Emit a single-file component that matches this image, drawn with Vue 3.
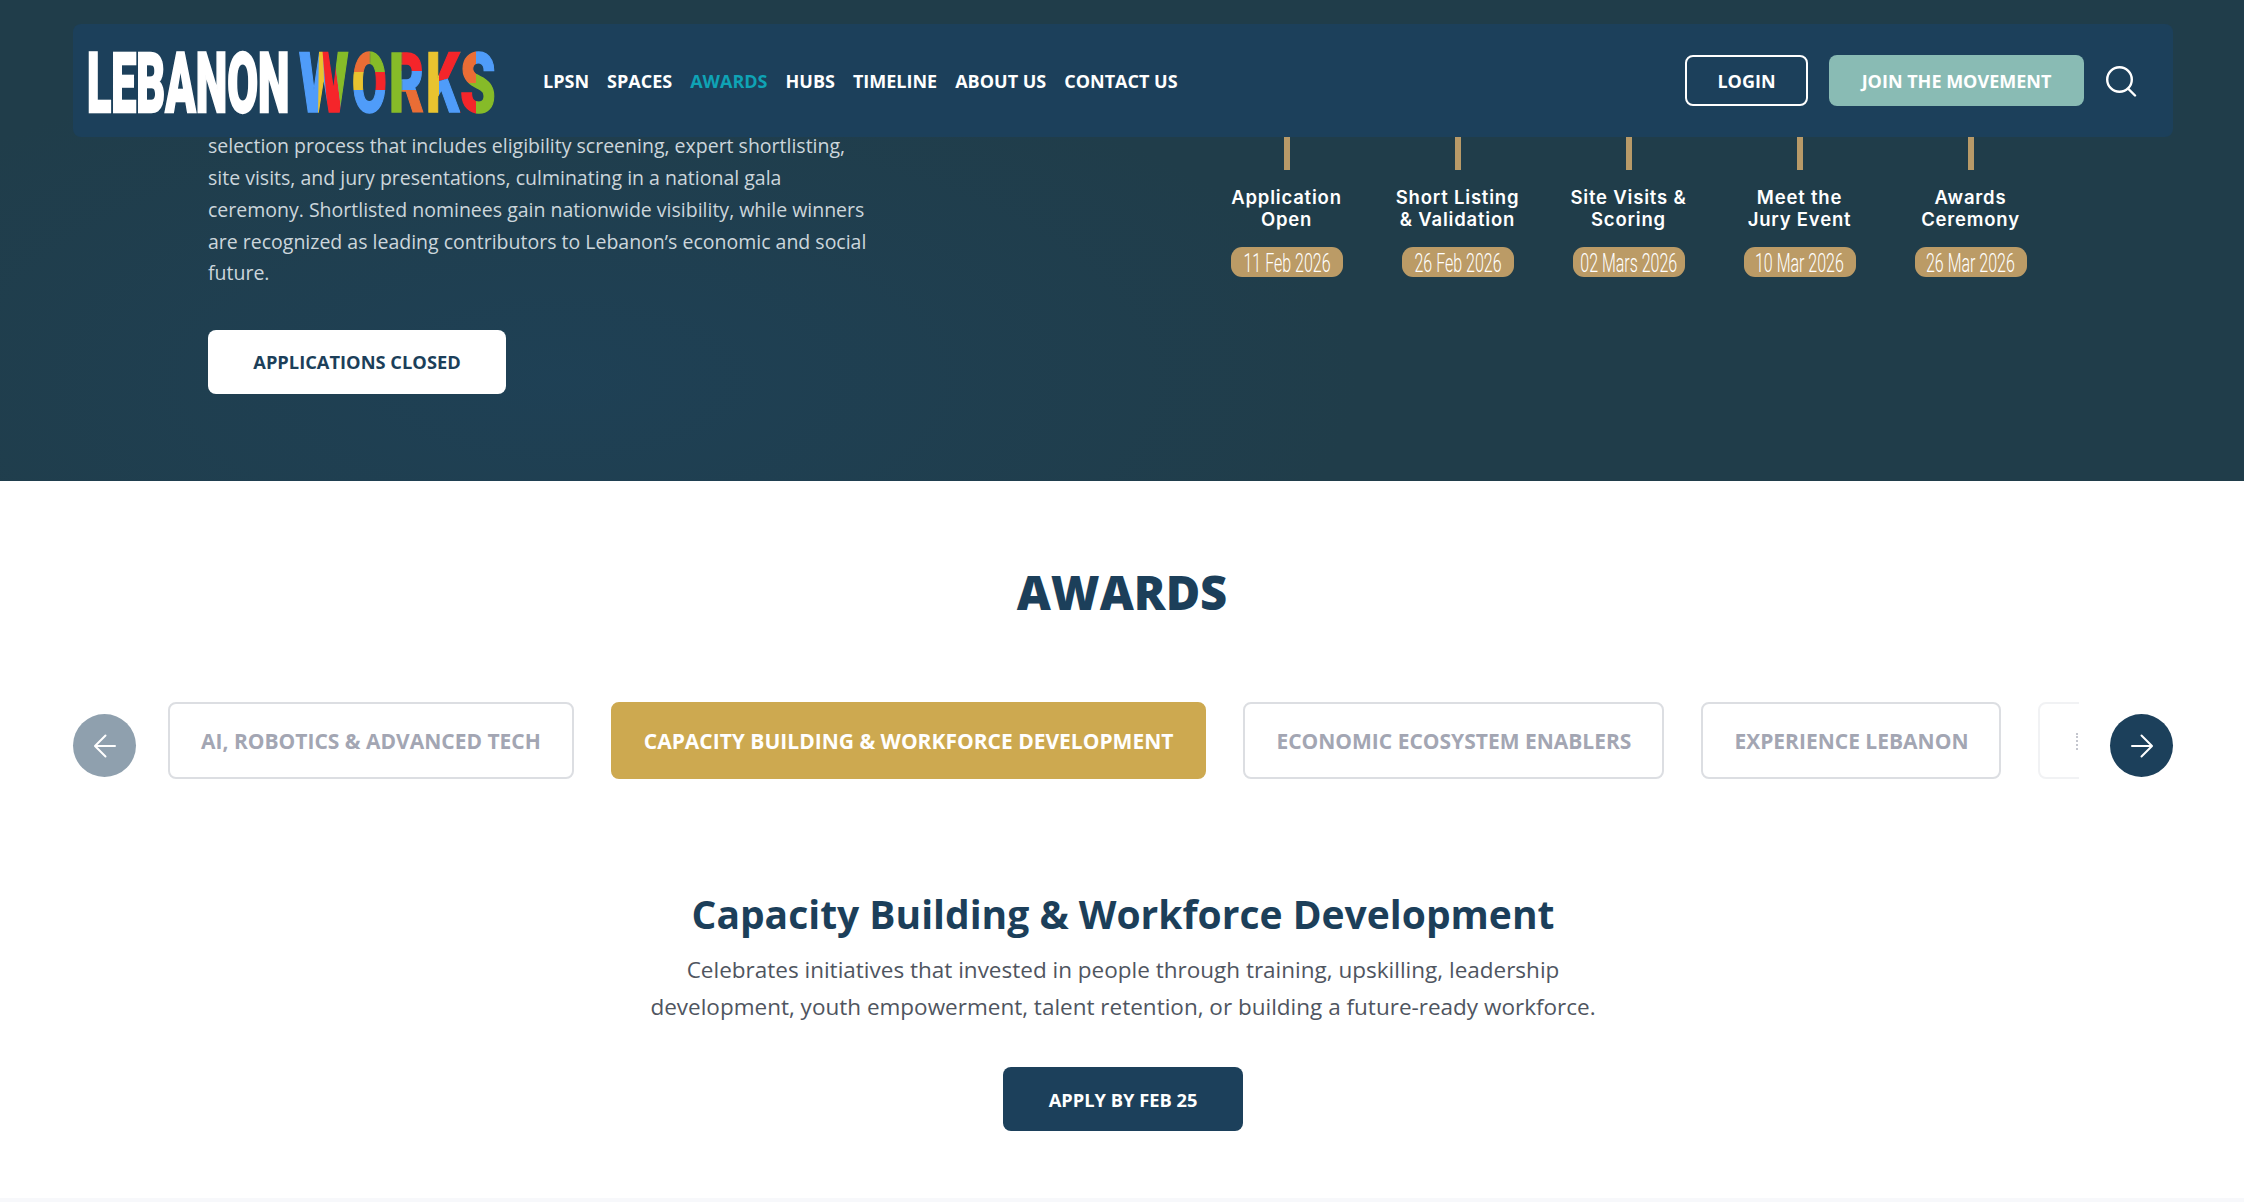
<template>
  <div class="page">
    <section class="hero">
      <header class="nav">
        <svg class="logo" viewBox="0 -14 458 100" role="img" aria-label="Lebanon Works">
          <defs>
            <pattern id="works-colors" patternUnits="userSpaceOnUse" width="210" height="72">
              <!-- W -->
              <rect x="0" y="0" width="56" height="72" fill="#4f9cf9" />
              <polygon points="24,0 28,0 30,72 23,72" fill="#e9c32f" />
              <polygon points="27,0 38,0 47,72 33,72" fill="#f5252a" />
              <polygon points="38,0 57,0 57,72 47,72" fill="#86bb28" />
              <!-- O -->
              <rect x="57" y="0" width="18" height="27" fill="#ea6d35" />
              <rect x="75" y="0" width="18" height="27" fill="#86bb28" />
              <rect x="57" y="27" width="18" height="18" fill="#e9c32f" />
              <rect x="75" y="27" width="18" height="18" fill="#f5252a" />
              <rect x="57" y="45" width="36" height="27" fill="#4f9cf9" />
              <!-- R -->
              <rect x="93" y="0" width="14" height="72" fill="#86bb28" />
              <rect x="107" y="0" width="23" height="26" fill="#f5252a" />
              <rect x="107" y="26" width="23" height="19" fill="#4f9cf9" />
              <rect x="107" y="45" width="23" height="27" fill="#ea6d35" />
              <!-- K -->
              <rect x="130" y="0" width="14" height="72" fill="#e9c32f" />
              <polygon points="144,0 166,0 166,30 144,36" fill="#f5252a" />
              <polygon points="144,36 166,30 166,72 144,72" fill="#4f9cf9" />
              <!-- S -->
              <rect x="165" y="0" width="16" height="38" fill="#ea6d35" />
              <rect x="181" y="0" width="20" height="28" fill="#4f9cf9" />
              <rect x="181" y="28" width="20" height="44" fill="#86bb28" />
              <rect x="165" y="38" width="16" height="7" fill="#86bb28" />
              <rect x="165" y="45" width="16" height="27" fill="#f5252a" />
            </pattern>
            <pattern
              v-for="l in worksLetters"
              :id="'works-' + l.ch"
              :key="l.ch"
              href="#works-colors"
              :patternTransform="`scale(${1 / l.s} 1) translate(${-l.x} 0)`"
            />
          </defs>
          <text class="logo-text logo-text--white" transform="translate(2 0) scale(0.533 1)" y="66.5" fill="#fff" stroke="#fff">LEBANON</text>
          <g transform="translate(210 0)">
            <text
              v-for="l in worksLetters"
              :key="l.ch"
              class="logo-text"
              :transform="`translate(${l.x} 0) scale(${l.s} 1)`"
              y="66.5"
              :fill="`url(#works-${l.ch})`"
              :stroke="`url(#works-${l.ch})`"
            >{{ l.ch }}</text>
          </g>
        </svg>
        <nav class="nav-links">
          <a v-for="link in links" :key="link" class="nav-link" :class="{ 'nav-link--active': link === 'AWARDS' }">{{ link }}</a>
        </nav>
        <div class="nav-actions">
          <button class="btn-login">LOGIN</button>
          <button class="btn-join">JOIN THE MOVEMENT</button>
          <svg class="search" viewBox="0 0 32 32" fill="none" stroke="#fff" stroke-width="2.4" stroke-linecap="round">
            <circle cx="14.5" cy="14.5" r="12.3" />
            <path d="M23.5 24l6.5 6.5" />
          </svg>
        </div>
      </header>

      <div class="hero-body">
        <div class="hero-copy">
          <p>selection process that includes eligibility screening, expert shortlisting, site visits, and jury presentations, culminating in a national gala ceremony. Shortlisted nominees gain nationwide visibility, while winners are recognized as leading contributors to Lebanon’s economic and social future.</p>
          <button class="btn-closed">APPLICATIONS CLOSED</button>
        </div>
        <ul class="timeline">
          <li v-for="step in steps" :key="step.date" class="step">
            <span class="step-tick"></span>
            <span class="step-label">{{ step.line1 }}<br />{{ step.line2 }}</span>
            <span class="step-date"><span class="step-date-text">{{ step.date }}</span></span>
          </li>
        </ul>
      </div>
    </section>

    <section class="awards">
      <h1 class="awards-title">AWARDS</h1>
      <div class="carousel">
        <button class="arrow arrow--prev" aria-label="Previous">
          <svg viewBox="0 0 24 24" fill="none" stroke="#fff" stroke-width="2" stroke-linecap="round" stroke-linejoin="round"><path d="M22 12H2.5M12.5 1.5L2 12l10.5 10.5" /></svg>
        </button>
        <div class="tabs">
          <button v-for="tab in tabs" :key="tab" class="tab" :class="{ 'tab--active': tab === active }">{{ tab }}</button>
          <!-- next tab is scrolled out, only its border and a sliver of its label show -->
          <span class="tab-peek"></span>
        </div>
        <button class="arrow arrow--next" aria-label="Next">
          <svg viewBox="0 0 24 24" fill="none" stroke="#fff" stroke-width="2" stroke-linecap="round" stroke-linejoin="round"><path d="M2 12h19.5M11.5 1.5L22 12 11.5 22.5" /></svg>
        </button>
      </div>

      <div class="detail">
        <h2>Capacity Building &amp; Workforce Development</h2>
        <p>Celebrates initiatives that invested in people through training, upskilling, leadership development, youth empowerment, talent retention, or building a future-ready workforce.</p>
        <button class="btn-apply">APPLY BY FEB 25</button>
      </div>
    </section>
    <div class="next-section"></div>
  </div>
</template>

<script setup>
const links = ['LPSN', 'SPACES', 'AWARDS', 'HUBS', 'TIMELINE', 'ABOUT US', 'CONTACT US']

// each letter gets its own squeeze, the colour blocks stay in logo coordinates
const worksLetters = [
  { ch: 'W', x: 4, s: 0.68 },
  { ch: 'O', x: 57, s: 0.6 },
  { ch: 'R', x: 94, s: 0.64 },
  { ch: 'K', x: 131, s: 0.62 },
  { ch: 'S', x: 165, s: 0.68 }
]

const steps = [
  { line1: 'Application', line2: 'Open', date: '11 Feb 2026' },
  { line1: 'Short Listing', line2: '& Validation', date: '26 Feb 2026' },
  { line1: 'Site Visits &', line2: 'Scoring', date: '02 Mars 2026' },
  { line1: 'Meet the', line2: 'Jury Event', date: '10 Mar 2026' },
  { line1: 'Awards', line2: 'Ceremony', date: '26 Mar 2026' }
]

const active = 'CAPACITY BUILDING & WORKFORCE DEVELOPMENT'
const tabs = [
  'AI, ROBOTICS & ADVANCED TECH',
  active,
  'ECONOMIC ECOSYSTEM ENABLERS',
  'EXPERIENCE LEBANON'
]
</script>

<style>
html, body {
  margin: 0;
  background: #fff;
}
</style>

<style scoped>
.page {
  width: 2244px;
  height: 1202px;
  overflow: hidden;
  font-family: "Open Sans", sans-serif;
}

button {
  font-family: inherit;
  border: 0;
  padding: 0;
}

/* hero */
.hero {
  height: 481px;
  box-sizing: border-box;
  padding: 24px 71px 0 73px;
  background:
    radial-gradient(ellipse 800px 340px at 560px 380px, rgba(30, 66, 90, 0.7), rgba(30, 66, 90, 0) 100%),
    #203d4a;
}

.nav {
  height: 113px;
  display: flex;
  align-items: center;
  padding: 0 36px 0 12px;
  background: #1c405b;
  border-radius: 8px;
}

.logo {
  width: 458px;
  height: 100px;
  flex: none;
}

.logo-text {
  font-family: Roboto, sans-serif;
  font-weight: 900;
  font-size: 84px;
  stroke-width: 1.5px;
}

.logo-text--white {
  stroke-width: 2.4px;
}

.nav-links {
  display: flex;
  gap: 18px;
}

.nav-link {
  color: #fff;
  font-size: 18px;
  font-weight: 700;
}

.nav-link--active {
  color: #0fa3b5;
}

.nav-actions {
  margin-left: auto;
  display: flex;
  align-items: center;
}

.btn-login,
.btn-join {
  height: 51px;
  color: #fff;
  font-size: 18px;
  font-weight: 700;
  border-radius: 8px;
}

.btn-login {
  width: 123px;
  background: transparent;
  border: 2px solid #fff;
}

.btn-join {
  width: 255px;
  margin-left: 21px;
  background: #89bbb4;
}

.search {
  width: 32px;
  height: 32px;
  margin-left: 21px;
}

.hero-body {
  display: flex;
  justify-content: space-between;
  padding-left: 135px;
}

.hero-copy {
  width: 672px;
  margin-top: -7px;
}

.hero-copy p {
  margin: 0;
  color: #ccd6dc;
  font-size: 19.5px;
  line-height: 31.85px;
}

.btn-closed {
  display: block;
  width: 298px;
  height: 64px;
  margin-top: 41px;
  padding-bottom: 2px;
  background: #fff;
  color: #1c3f5a;
  font-size: 18.3px;
  font-weight: 700;
  border-radius: 8px;
}

.timeline {
  list-style: none;
  display: flex;
  margin: 0;
  padding: 0 117px 0 0;
}

.step {
  width: 171px;
  display: flex;
  flex-direction: column;
  align-items: center;
}

.step-tick {
  width: 6px;
  height: 33px;
  background: #b89a68;
}

.step-label {
  margin-top: 16px;
  color: #fff;
  font-family: Inter, sans-serif;
  font-size: 18.5px;
  font-weight: 600;
  letter-spacing: 0.8px;
  line-height: 22px;
  text-align: center;
  white-space: nowrap;
}

.step-date {
  width: 112px;
  height: 30px;
  box-sizing: border-box;
  padding-top: 2px;
  margin-top: 17px;
  display: flex;
  align-items: center;
  justify-content: center;
  background: #bb9b66;
  border-radius: 11px;
}

.step-date-text {
  display: inline-block;
  color: #fff;
  font-family: Roboto, sans-serif;
  font-weight: 300;
  font-size: 25px;
  white-space: nowrap;
  transform: scaleX(0.64);
}

/* awards */
.awards {
  height: 717px;
  box-sizing: border-box;
  padding-top: 79px;
  background: #fff;
}

.awards-title {
  margin: 0;
  text-align: center;
  color: #1c3f5a;
  font-size: 47px;
  line-height: 64px;
  font-weight: 800;
}

.carousel {
  margin-top: 78px;
  display: flex;
  align-items: center;
  padding: 0 71px 0 73px;
}

.arrow {
  width: 63px;
  height: 63px;
  flex: none;
  margin-top: 10px;
  display: flex;
  align-items: center;
  justify-content: center;
  border-radius: 50%;
}

.arrow svg {
  width: 24px;
  height: 24px;
}

.arrow--prev {
  background: #8fa0ae;
}

.arrow--next {
  background: #1c405b;
}

.tabs {
  flex: 1;
  min-width: 0;
  margin: 0 31px 0 32px;
  display: flex;
  gap: 37px;
  overflow: hidden;
}

.tab {
  flex: none;
  height: 77px;
  box-sizing: border-box;
  padding: 0 31px;
  background: #fff;
  border: 2px solid #dcdee2;
  border-radius: 8px;
  color: #a3a6b3;
  font-size: 21px;
  font-weight: 700;
  white-space: nowrap;
}

.tab--active {
  background: #cda950;
  border-color: #cda950;
  color: #fff;
}

.tab-peek {
  flex: none;
  position: relative;
  width: 120px;
  height: 77px;
  box-sizing: border-box;
  border: 2px solid #f1f2f4;
  border-radius: 8px;
}

.tab-peek::after {
  content: "";
  position: absolute;
  left: 36px;
  top: 29px;
  height: 17px;
  border-left: 2px dotted #c4c6ce;
}

.detail {
  margin-top: 108px;
  padding-left: 2px;
  display: flex;
  flex-direction: column;
  align-items: center;
  text-align: center;
}

.detail h2 {
  margin: 0;
  color: #1c3f5a;
  font-size: 39px;
  line-height: 54px;
  font-weight: 700;
}

.detail p {
  width: 990px;
  margin: 10px 0 0;
  color: #4f5560;
  font-size: 22.5px;
  line-height: 37px;
}

.btn-apply {
  width: 240px;
  height: 64px;
  margin-top: 42px;
  background: #1c405b;
  color: #fff;
  font-size: 18.3px;
  font-weight: 700;
  border-radius: 8px;
}

.next-section {
  height: 4px;
  background: #f7f8fb;
}
</style>
